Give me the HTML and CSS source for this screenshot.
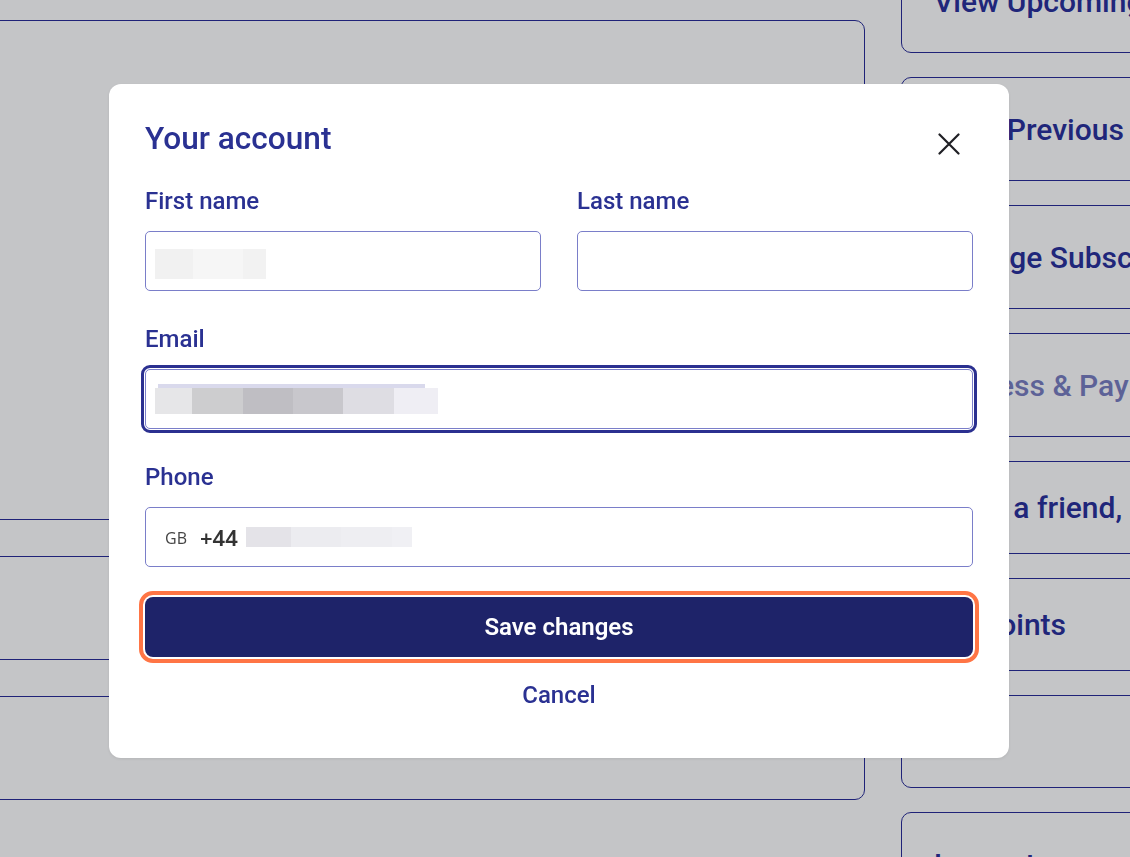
FILE: index.html
```
<!DOCTYPE html>
<html lang="en">
<head>
<meta charset="utf-8">
<title>Your account</title>
<link rel="stylesheet" href="styles.css">
</head>
<body>
<div class="page">
  <section class="main-card">
    <div class="sec-top"></div>
    <div class="sec"></div>
    <div class="sec-last"></div>
  </section>
  <aside class="side">
    <a class="side-card">View Upcoming Orders</a>
    <a class="side-card">View Previous Orders</a>
    <a class="side-card">Manage Subscription</a>
    <a class="side-card muted">Address &amp; Payment</a>
    <a class="side-card short">Refer a friend, get rewards</a>
    <a class="side-card short">My points</a>
    <a class="side-card short"></a>
    <a class="side-card">Log out</a>
  </aside>
</div>

<div class="overlay">
  <div class="modal" role="dialog" aria-labelledby="modal-title">
    <div class="modal-head">
      <h2 class="title" id="modal-title">Your account</h2>
      <button class="close" aria-label="Close">
        <svg viewBox="0 0 22 22" width="22" height="22" aria-hidden="true">
          <path d="M1.5 1.5 L20.5 20.5 M20.5 1.5 L1.5 20.5" stroke="#1f1f24" stroke-width="2.2" stroke-linecap="round" fill="none"/>
        </svg>
      </button>
    </div>

    <div class="row">
      <div class="field">
        <label>First name</label>
        <div class="box">
          <div class="blur first-blur"><span class="f1"></span><span class="f2"></span><span class="f3"></span></div>
        </div>
      </div>
      <div class="field">
        <label>Last name</label>
        <div class="box"></div>
      </div>
    </div>

    <div class="field spaced">
      <label>Email</label>
      <div class="box focused">
        <div class="email-blur">
          <span class="band"></span>
          <div class="blur"><span class="e1"></span><span class="e2"></span><span class="e3"></span><span class="e4"></span><span class="e5"></span><span class="e6"></span></div>
        </div>
      </div>
    </div>

    <div class="field spaced">
      <label>Phone</label>
      <div class="box phone">
        <span class="cc">GB</span>
        <span class="dial">+44</span>
        <div class="blur phone-blur"><span class="p1"></span><span class="p2"></span><span class="p3"></span><span class="p4"></span></div>
      </div>
    </div>

    <button class="save">Save changes</button>
    <button class="cancel">Cancel</button>
  </div>
</div>
</body>
</html>
```
FILE: styles.css
```
* { box-sizing: border-box; }
html, body { margin: 0; }
body {
  width: 1130px;
  height: 857px;
  overflow: hidden;
  background: #c4c5c7;
  font-family: Roboto, "Liberation Sans", sans-serif;
  position: relative;
}

/* background page */
.page {
  display: flex;
  align-items: flex-start;
}
.main-card {
  flex: 0 0 885px;
  margin-left: -20px;
  margin-top: 20px;
  border: 1px solid #1f2378;
  border-radius: 10px;
  display: flex;
  flex-direction: column;
}
.sec-top { height: 499px; border-bottom: 1px solid #1f2378; }
.sec { margin-top: 36px; height: 104px; border-top: 1px solid #1f2378; border-bottom: 1px solid #1f2378; }
.sec-last { margin-top: 36px; height: 103px; border-top: 1px solid #1f2378; }

.side {
  flex: 0 0 420px;
  margin-left: 36px;
  margin-top: -51px;
  display: flex;
  flex-direction: column;
  gap: 24px;
}
.side-card {
  height: 104px;
  border: 1px solid #1f2378;
  border-radius: 10px;
  display: flex;
  align-items: center;
  padding-left: 32px;
  font-size: 30px;
  font-weight: 500;
  color: #20267a;
  white-space: nowrap;
  overflow: hidden;
}
.side-card.short { height: 93px; }
.side-card.muted { color: #5d6297; }

/* modal */
.overlay {
  position: fixed;
  inset: 0;
  display: flex;
  justify-content: center;
  align-items: flex-start;
  padding: 84px 12px 0 0;
}
.modal {
  width: 900px;
  background: #fff;
  border-radius: 12px;
  padding: 37px 36px 37px;
  box-shadow: 0 1px 3px rgba(0, 0, 0, 0.08);
}
.modal-head {
  display: flex;
  justify-content: space-between;
  align-items: flex-start;
}
.title {
  margin: 0;
  font-size: 31.6px;
  line-height: 36px;
  font-weight: 500;
  color: #2a3192;
}
.close {
  margin: 12px 13px 0 0;
  width: 22px;
  height: 22px;
  padding: 0;
  border: 0;
  background: none;
  display: block;
}
.close svg { display: block; }

.row {
  display: grid;
  grid-template-columns: 1fr 1fr;
  gap: 36px;
  margin-top: 30px;
}
.field label {
  display: block;
  font-size: 24px;
  line-height: 28px;
  font-weight: 500;
  color: #2a3192;
  margin-bottom: 16px;
}
.field.spaced { margin-top: 34px; }
.box {
  height: 60px;
  border: 1px solid #7a7ec9;
  border-radius: 5px;
  display: flex;
  align-items: center;
  padding-left: 9px;
}
.box.focused {
  outline: 3px solid #2b3090;
  outline-offset: 1px;
}

.blur { display: flex; }
.blur span { display: block; }
.first-blur { margin-top: 6px; }
.first-blur span { height: 30px; }
.first-blur .f1 { width: 38px; background: #f1f1f1; }
.first-blur .f2 { width: 50px; background: #f6f6f6; }
.first-blur .f3 { width: 23px; background: #f2f2f2; }

.email-blur { margin-top: -1px; }
.email-blur .band { display: block; margin-left: 3px; width: 267px; height: 4px; background: #d9d9ec; }
.email-blur .blur span { height: 26px; }
.e1 { width: 37px; background: #e6e6e8; }
.e2 { width: 51px; background: #cdcdcf; }
.e3 { width: 50px; background: #bfbec3; }
.e4 { width: 50px; background: #c8c7cc; }
.e5 { width: 51px; background: #dedde3; }
.e6 { width: 44px; background: #efeef4; }

.phone { padding-left: 19px; }
.cc {
  font-family: "Open Sans", "Noto Sans", sans-serif;
  font-size: 16px;
  color: #444;
  margin-top: 2px;
}
.dial {
  font-family: "Noto Sans", "Open Sans", sans-serif;
  font-size: 22px;
  font-weight: 600;
  color: #333;
  margin-left: 13px;
}
.phone-blur { margin-left: 8px; }
.phone-blur span { height: 20px; }
.p1 { width: 45px; background: #e4e3e8; }
.p2 { width: 50px; background: #ececf0; }
.p3 { width: 51px; background: #eeeef2; }
.p4 { width: 20px; background: #f0f0f4; }

.save {
  display: block;
  width: 100%;
  height: 60px;
  margin-top: 30px;
  border: 0;
  border-radius: 8px;
  background: #1e2369;
  color: #fff;
  font-family: inherit;
  font-size: 24px;
  font-weight: 600;
  outline: 4px solid #ff7545;
  outline-offset: 2px;
}
.cancel {
  display: block;
  width: 100%;
  margin-top: 12px;
  padding: 12px 0;
  border: 0;
  background: none;
  font-family: inherit;
  font-size: 24px;
  line-height: 28px;
  font-weight: 500;
  color: #2a3192;
  text-align: center;
}
```
